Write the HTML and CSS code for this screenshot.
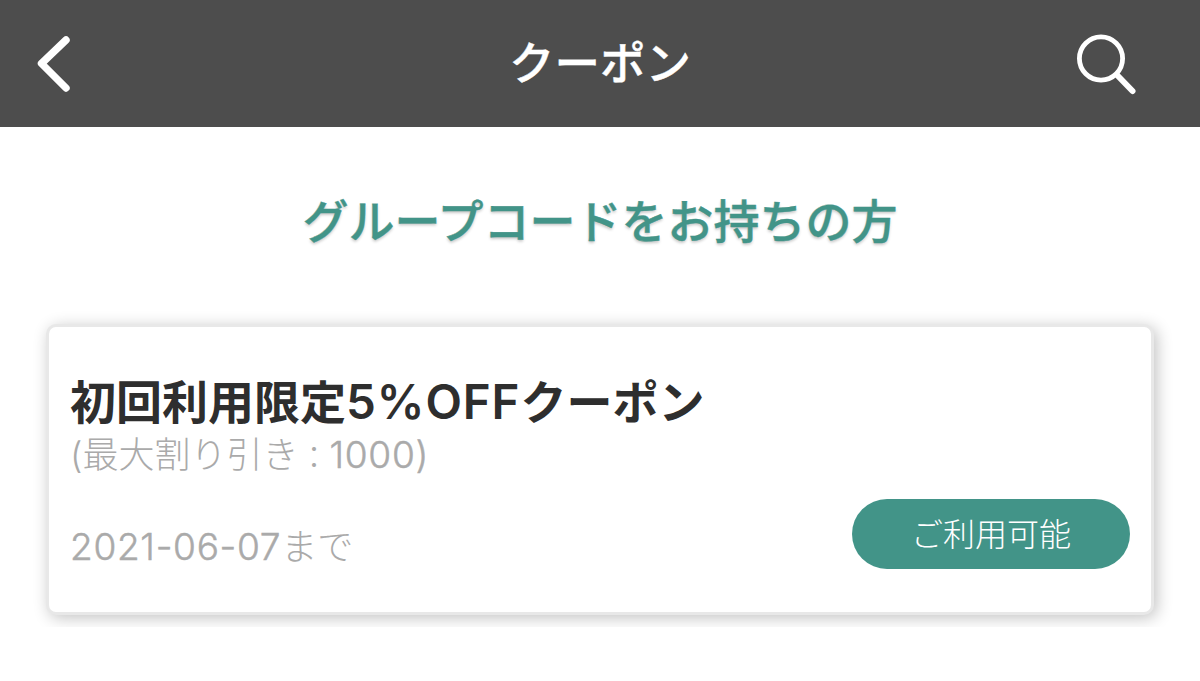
FILE: index.html
```
<!DOCTYPE html>
<html lang="ja">
<head>
    <meta charset="UTF-8">
    <meta name="viewport" content="width=device-width, initial-scale=1.0">
    <title>クーポン</title>
    <link rel="stylesheet" href="styles.css">
</head>
<body>
    <header class="header">
        <a class="back" href="#">
            <svg width="40" height="60" viewBox="0 0 40 60">
                <path d="M32 6 L7.5 29.5 L32 54" fill="none" stroke="#fff" stroke-width="7.4" stroke-linecap="round" stroke-linejoin="round"/>
            </svg>
        </a>
        <h1 class="header-title">クーポン</h1>
        <a class="search" href="#">
            <svg width="64" height="64" viewBox="0 0 64 64">
                <circle cx="26" cy="26.5" r="21.6" fill="none" stroke="#fff" stroke-width="4.8"/>
                <path d="M42 43 L57.5 59" stroke="#fff" stroke-width="6" stroke-linecap="round"/>
            </svg>
        </a>
    </header>
    <main class="content">
        <h2 class="group-link">グループコードをお持ちの方</h2>
        <section class="coupon-list">
            <article class="coupon">
                <h3 class="coupon-name">初回利用限定<span class="latin">5%OFF</span>クーポン</h3>
                <p class="coupon-max">(最大割り引き<span class="colon">：</span><span class="latin">1000)</span></p>
                <div class="coupon-footer">
                    <p class="coupon-date"><span class="latin">2021-06-07</span>まで</p>
                    <a class="coupon-button" href="#">ご利用可能</a>
                </div>
            </article>
        </section>
    </main>
</body>
</html>
```

FILE: styles.css
```
*{
    box-sizing: border-box;
}
body{
    margin: 0;
    background-color: #fff;
    font-family: Inter, "Noto Sans CJK JP", sans-serif;
}
h1,
h2,
h3,
p{
    margin: 0;
}
a{
    text-decoration: none;
}
svg{
    display: block;
}
/*Cabecera*/
.header{
    display: grid;
    grid-template-columns: 200px 1fr 200px;
    align-items: center;
    height: 127px;
    padding: 0 61px 0 34px;
    background-color: #4d4d4d;
    color: #fff;
}
.header-title{
    padding-left: 27px;
    font-size: 45.5px;
    font-weight: 500;
    line-height: 60px;
    text-align: center;
    -webkit-text-stroke: .4px #fff;
}
.search{
    justify-self: end;
}
/*Contenido*/
.group-link{
    padding-top: 64px;
    color: #429488;
    font-size: 46px;
    font-weight: 500;
    line-height: 60px;
    text-align: center;
    text-shadow: 0 2px 3px rgba(0,0,0,.22);
    -webkit-text-stroke: .4px #429488;
}
.coupon-list{
    margin-top: 53px;
    padding: 20px 46px 12px;
    overflow: hidden;
}
.coupon{
    height: 291px;
    padding: 44px 21px 0;
    border: 3px solid #e8e8e8;
    border-radius: 10px;
    background-color: #fff;
    box-shadow: 3px 3px 16px rgba(0,0,0,.24);
}
.coupon-name{
    color: #2e2e2e;
    font-size: 46px;
    font-weight: 600;
    line-height: 62px;
    white-space: nowrap;
}
.coupon-name .latin{
    font-size: 47.5px;
    letter-spacing: .9px;
}
.coupon-max,
.coupon-date{
    color: #aaa;
    font-size: 36px;
    font-weight: 300;
    line-height: 44px;
}
.coupon-max .latin,
.coupon-date .latin{
    font-size: 37px;
    letter-spacing: .7px;
    -webkit-text-stroke: .5px #aaa;
}
.coupon-max .colon{
    font-size: 31px;
}
.coupon-footer{
    display: flex;
    justify-content: space-between;
    margin-top: 20px;
}
.coupon-date{
    padding-top: 26px;
}
.coupon-button{
    width: 278px;
    height: 70px;
    border-radius: 35px;
    background-color: #429488;
    color: #fff;
    font-size: 32px;
    font-weight: 300;
    line-height: 72px;
    text-align: center;
}
```
